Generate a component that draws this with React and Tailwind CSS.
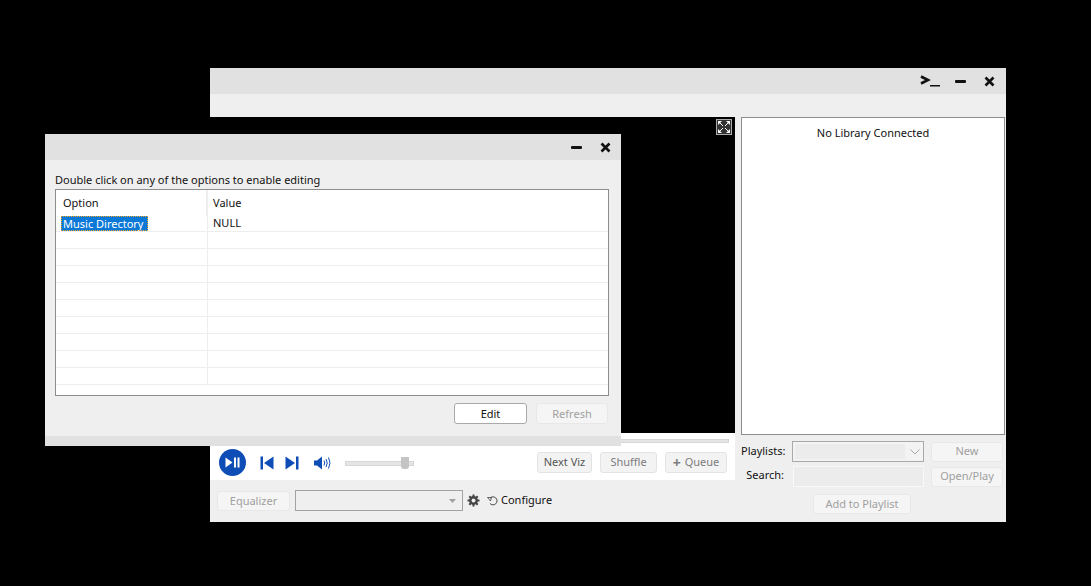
import React from "react";

const font = { fontFamily: '"Noto Sans", sans-serif' };

function MinIcon() {
  return <div className="w-[11px] h-[3px] bg-[#111] rounded-[1px]" />;
}

function CloseIcon() {
  return (
    <svg width="11" height="11" viewBox="0 0 11 11">
      <path d="M1.5 1.5L9.5 9.5M9.5 1.5L1.5 9.5" stroke="#111" strokeWidth="2.6" />
    </svg>
  );
}

function GhostButton({ children, className }) {
  return (
    <div
      className={
        "flex items-center justify-center rounded-[3px] border border-[#e8e8e8] bg-[#f5f5f5] text-[11px] text-[#a0a0a0] " +
        className
      }
    >
      {children}
    </div>
  );
}

function PlayerButton({ children, className }) {
  return (
    <div
      className={
        "flex items-center justify-center h-[21px] rounded-[3px] border border-[#e3e3e3] bg-[#f3f3f3] text-[11px] " +
        className
      }
    >
      {children}
    </div>
  );
}

function PlayerControls() {
  return (
    <div className="flex-1 flex items-center bg-white pl-[9px] pr-[8px] pt-[2px]">
      <div className="w-[27px] h-[27px] rounded-full bg-[#0e4db5] flex items-center justify-center">
        <svg width="15" height="11" viewBox="0 0 15 11">
          <path d="M0.5 0.5L7.5 5.5L0.5 10.5Z" fill="#fff" />
          <rect x="9" y="0.5" width="2" height="10" fill="#fff" />
          <rect x="12.5" y="0.5" width="2" height="10" fill="#fff" />
        </svg>
      </div>
      <svg className="ml-[14px]" width="14" height="14" viewBox="0 0 14 14">
        <rect x="0.5" y="0.5" width="2.5" height="13" fill="#0e4db5" />
        <path d="M13.5 0.5V13.5L4 7Z" fill="#0e4db5" />
      </svg>
      <svg className="ml-[11px]" width="14" height="14" viewBox="0 0 14 14">
        <rect x="11" y="0.5" width="2.5" height="13" fill="#0e4db5" />
        <path d="M0.5 0.5V13.5L10 7Z" fill="#0e4db5" />
      </svg>
      <svg className="ml-[15px]" width="18" height="14" viewBox="0 0 18 14">
        <path d="M0 4.5H3L8 0.5V13.5L3 9.5H0Z" fill="#0e4db5" />
        <path d="M10 4.5Q11.5 7 10 9.5M12 3Q14.5 7 12 11M14.5 1.5Q17.5 7 14.5 12.5" stroke="#0e4db5" strokeWidth="1" fill="none" />
      </svg>
      <div className="ml-[13px] mt-[2px] relative w-[69px] h-[5px] bg-[#e3e6e3] border border-[#d5d8d5]">
        <div className="absolute left-[55px] top-[-5px] w-[8px] h-[12px] bg-[#c4c4c4] rounded-b-[3px]" />
      </div>
      <div className="flex-1" />
      <PlayerButton className="w-[55px] text-[#555]">Next Viz</PlayerButton>
      <PlayerButton className="w-[57px] ml-[8px] text-[#7c7c7c]">Shuffle</PlayerButton>
      <PlayerButton className="w-[62px] ml-[8px] text-[#7c7c7c] gap-[4px]">
        <span className="text-[14px] leading-none font-bold">+</span>
        Queue
      </PlayerButton>
    </div>
  );
}

function LibraryPanel() {
  return (
    <div className="w-[271px] flex flex-col pl-[6px] pr-[1px] text-[11px] text-[#111]">
      <div className="h-[318px] bg-white border border-[#8c8c8c] flex justify-center pt-[7px]">
        No Library Connected
      </div>
      <div className="flex items-center mt-[6px] h-[21px]">
        <div className="w-[43px] text-right whitespace-nowrap">Playlists:</div>
        <div className="ml-[8px] w-[132px] h-[21px] border border-[#a9a9a9] bg-[#f3f3f3] p-[2px] flex items-center">
          <div className="w-[110px] h-full bg-[#ececec]" />
          <svg className="ml-[5px]" width="10" height="6" viewBox="0 0 10 6">
            <path d="M0.5 0.5L5 5L9.5 0.5" stroke="#a8a8a8" fill="none" />
          </svg>
        </div>
        <GhostButton className="ml-[7px] w-[72px] h-[20px]">New</GhostButton>
      </div>
      <div className="flex items-center mt-[4px] h-[21px]">
        <div className="w-[43px] text-right pb-[2px]">Search:</div>
        <div className="ml-[9px] w-[131px] h-[21px] border border-[#f8f8f8] bg-[#ececec]" />
        <GhostButton className="ml-[7px] w-[72px] h-[20px]">Open/Play</GhostButton>
      </div>
      <div className="flex justify-center mt-[7px] pr-[22px]">
        <GhostButton className="w-[98px] h-[20px] pt-[1px]">Add to Playlist</GhostButton>
      </div>
    </div>
  );
}

function MainWindow() {
  return (
    <div className="absolute left-[210px] top-[68px] w-[796px] h-[454px] flex flex-col bg-[#efefef]">
      <div className="h-[26px] bg-[#e1e1e1] flex items-center justify-end pr-[11px] shrink-0">
        <svg width="20" height="12" viewBox="0 0 20 12">
          <path d="M1 1.5L8 5L1 8.5" stroke="#111" strokeWidth="2.6" fill="none" />
          <rect x="10" y="10" width="10" height="1.5" fill="#111" />
        </svg>
        <div className="ml-[15px]"><MinIcon /></div>
        <div className="ml-[18px]"><CloseIcon /></div>
      </div>
      <div className="h-[23px] shrink-0" />
      <div className="flex flex-1 min-h-0">
        <div className="w-[525px] flex flex-col">
          <div className="h-[316px] bg-black flex justify-end pr-[3px] pt-[2px]">
            <div className="w-[16px] h-[16px] bg-[#333] border border-[#aaa] flex items-center justify-center">
              <svg width="12" height="12" viewBox="0 0 12 12">
                <path d="M0 0H4L0 4ZM12 0V4L8 0ZM0 12V8L4 12ZM12 12H8L12 8Z" fill="#fff" />
                <path d="M2 2L5 5M10 2L7 5M2 10L5 7M10 10L7 7" stroke="#fff" />
              </svg>
            </div>
          </div>
          <div className="h-[47px] flex flex-col bg-white">
            <div className="flex justify-end pr-[6px] pt-[6px] bg-white">
              <div className="w-[200px] h-[4px] bg-[#e3e6e3] border border-[#d5d8d5]" />
            </div>
            <PlayerControls />
          </div>
          <div className="flex-1 flex items-center pl-[7px] pb-[1px] text-[11px] text-[#111]">
            <GhostButton className="w-[73px] h-[20px] pt-[1px]">Equalizer</GhostButton>
            <div className="ml-[5px] w-[168px] h-[21px] border border-[#a3a3a3] flex items-center justify-end pr-[6px]">
              <svg width="7" height="4" viewBox="0 0 7 4">
                <path d="M0 0H7L3.5 4Z" fill="#a0a0a0" />
              </svg>
            </div>
            <svg className="ml-[4px]" width="13" height="13" viewBox="0 0 13 13">
              <circle cx="6.5" cy="6.5" r="3.2" fill="none" stroke="#444" strokeWidth="2.4" />
              <path d="M6.5 0.5V3M6.5 10V12.5M0.5 6.5H3M10 6.5H12.5M2.3 2.3L4 4M9 9L10.7 10.7M10.7 2.3L9 4M4 9L2.3 10.7" stroke="#444" strokeWidth="2" />
            </svg>
            <svg className="ml-[7px]" width="11" height="11" viewBox="0 0 11 11">
              <path d="M3 3.2A4 4 0 1 1 3 8.5" fill="none" stroke="#444" />
              <path d="M0.5 2.5H4.5L3.5 6Z" fill="none" stroke="#444" strokeWidth="0.8" />
            </svg>
            <span className="ml-[3px]">Configure</span>
          </div>
        </div>
        <LibraryPanel />
      </div>
    </div>
  );
}

const rows = Array.from({ length: 9 });

function OptionsTable() {
  return (
    <div className="h-[207px] bg-white border border-[#8c8c8c] overflow-hidden text-[11px] text-[#111] mt-[1px]">
      <div className="flex h-[26px] items-center">
        <div className="w-[152px] h-full flex items-center pl-[7px] border-r-2 border-[#eeeeee]">Option</div>
        <div className="pl-[5px]">Value</div>
      </div>
      <div className="flex h-[16px] border-b border-[#eeeeee] items-center">
        <div className="w-[152px] h-full pl-[5px] border-r border-[#eeeeee]">
          <div className="w-[87px] h-full bg-[#0a78d7] text-white pl-[2px] leading-[16px] outline-1 outline-dotted outline-[#f5a623] outline-offset-[-1px]">
            Music Directory
          </div>
        </div>
        <div className="pl-[5px]">NULL</div>
      </div>
      {rows.map((_, i) => (
        <div key={i} className="flex h-[17px] border-b border-[#eeeeee]">
          <div className="w-[152px] h-full border-r border-[#eeeeee]" />
        </div>
      ))}
    </div>
  );
}

function OptionsDialog() {
  return (
    <div className="absolute left-[45px] top-[134px] w-[576px] h-[312px] flex flex-col bg-[#efefef]">
      <div className="h-[26px] bg-[#e1e1e1] flex items-center justify-end pr-[10px] shrink-0">
        <MinIcon />
        <div className="ml-[18px]"><CloseIcon /></div>
      </div>
      <div className="flex-1 pl-[10px] pr-[12px] pt-[11px]">
        <div className="text-[11px] leading-[17px] text-[#111]">Double click on any of the options to enable editing</div>
        <OptionsTable />
        <div className="flex justify-end mt-[7px] pr-[1px]">
          <div className="w-[73px] h-[21px] pt-[1px] flex items-center justify-center rounded-[3px] border border-[#a9a9a9] bg-white text-[11px] text-[#111] mr-[1px]">
            Edit
          </div>
          <GhostButton className="w-[72px] h-[21px] pt-[1px] ml-[8px]">Refresh</GhostButton>
        </div>
      </div>
      <div className="h-[10px] bg-[#e1e1e1] shrink-0" />
    </div>
  );
}

export default function App() {
  return (
    <div className="relative w-[1091px] h-[586px] bg-black overflow-hidden" style={font}>
      <MainWindow />
      <OptionsDialog />
    </div>
  );
}
